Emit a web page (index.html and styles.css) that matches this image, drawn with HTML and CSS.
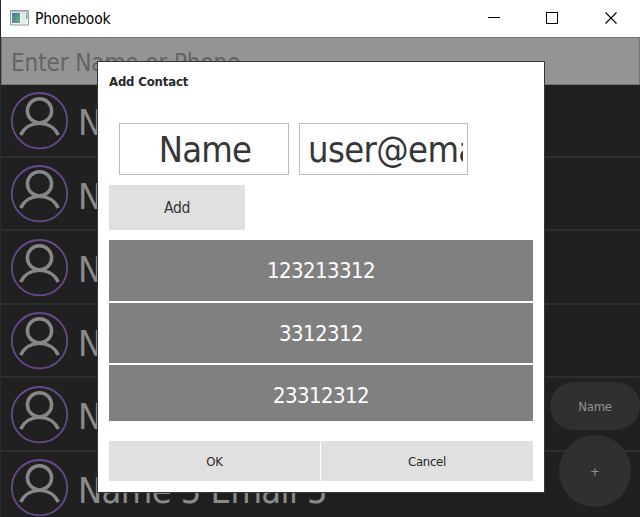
FILE: index.html
```
<!DOCTYPE html>
<html lang="en">
<head>
<meta charset="utf-8">
<title>Phonebook</title>
<link rel="stylesheet" href="styles.css">
</head>
<body>
<svg class="defs" width="0" height="0">
  <symbol id="person" viewBox="0 0 58 58">
    <circle cx="28.5" cy="28.7" r="27.7" fill="none" stroke="#67498a" stroke-width="1.8"/>
    <g fill="none" stroke="#878787" stroke-width="3.5">
      <circle cx="28.5" cy="18.8" r="12.1"/>
      <path d="M9.7 43C17 27.3 40 27.3 47.3 43"/>
    </g>
  </symbol>
</svg>
<div class="window">
  <header class="titlebar">
    <svg class="app-icon" width="19" height="16" viewBox="0 0 19 16">
      <defs><linearGradient id="screen" x1="0" y1="0" x2="1" y2="1"><stop offset="0" stop-color="#4777a0"/><stop offset="1" stop-color="#63b37c"/></linearGradient></defs>
      <path fill="#f3f4f5" stroke="#969ca1" d="M.5.5h18v14.500h-18z"/>
      <path fill="#bfc4c9" d="M1 1h17v1.500H1z"/>
      <path fill="url(#screen)" d="M2 3h8v10H2z"/>
      <path fill="#e5e8eb" d="M11 3h4v10h-4z"/>
      <path fill="#62ad8b" d="M16 3h1.500v6H16z"/>
    </svg>
    <h1 class="title">Phonebook</h1>
    <svg class="controls" width="132" height="14" viewBox="0 0 132 14" fill="none" stroke="#000">
      <path d="M0 6.500h12M58.500 1.500h11v11h-11z" shape-rendering="crispEdges"/>
      <path d="M117.500 1.500l11 11M128.500 1.500l-11 11" stroke-width="1.100"/>
    </svg>
  </header>
  <main class="content">
    <div class="search">Enter Name or Phone</div>
    <ul class="contacts">
      <li class="contact"><svg class="avatar"><use href="#person"/></svg><span>Name 0 Email 0</span></li>
      <li class="contact"><svg class="avatar"><use href="#person"/></svg><span>Name 1 Email 1</span></li>
      <li class="contact"><svg class="avatar"><use href="#person"/></svg><span>Name 2 Email 2</span></li>
      <li class="contact"><svg class="avatar"><use href="#person"/></svg><span>Name 3 Email 3</span></li>
      <li class="contact"><svg class="avatar"><use href="#person"/></svg><span>Name 4 Email 4</span></li>
      <li class="contact"><svg class="avatar"><use href="#person"/></svg><span>Name 5 Email 5</span></li>
    </ul>
  </main>
  <div class="floating">
    <button class="sort">Name</button>
    <button class="plus">+</button>
  </div>
  <section class="dialog">
    <h2 class="dialog-title">Add Contact</h2>
    <div class="fields">
      <div class="field name"><span>Name</span></div>
      <div class="field email"><span>user@email.com</span></div>
    </div>
    <button class="add">Add</button>
    <ul class="phones">
      <li>123213312</li>
      <li>3312312</li>
      <li>23312312</li>
    </ul>
    <div class="actions">
      <button>OK</button>
      <button>Cancel</button>
    </div>
  </section>
</div>
</body>
</html>
```
FILE: styles.css
```
* { box-sizing: border-box; }
body { margin: 0; }
body, button { font-family: "DejaVu Sans Condensed", "DejaVu Sans", sans-serif; font-stretch: condensed; }
h1, h2, ul { margin: 0; padding: 0; font-weight: normal; }
ul { list-style: none; }
button { border: 0; padding: 0; }
.defs { position: absolute; }
.window { position: relative; width: 640px; height: 517px; overflow: hidden; display: flex; flex-direction: column; background: #202020; border-left: 1px solid #2b2b2b; }
.titlebar { height: 37px; flex: none; display: flex; align-items: center; background: #fff; padding: 0 20px 0 9px; }
.app-icon { margin-top: -2px; }
.title { flex: 1; margin-left: 6px; font-size: 15.5px; line-height: 20px; letter-spacing: -.2px; }
.controls { margin-top: -2px; }
.search { height: 48px; padding-left: 9px; border: 1px solid #727272; background: #949494; color: #646464; font-size: 24px; line-height: 50px; letter-spacing: -.1px; white-space: nowrap; }
.contacts { margin-top: -.9px; }
.contact { height: 73.5px; padding: 2px 0 0 10px; display: flex; align-items: center; border-bottom: 2px solid #2e2e2e; color: #8b8b8b; font-size: 36px; letter-spacing: -.6px; white-space: nowrap; }
.contact span { margin-top: 4px; }
.avatar { width: 58px; height: 58px; margin-right: 9px; flex: none; }
.floating { position: absolute; right: 0; top: 382px; width: 90px; display: flex; flex-direction: column; align-items: center; gap: 5px; }
.floating button { background: #303032; color: #919191; }
.sort { width: 90px; height: 48px; border-radius: 24px; font-size: 13px; letter-spacing: -.3px; }
.plus { width: 72px; height: 72px; border-radius: 50%; font-size: 13px; }
.dialog { position: absolute; left: 96px; top: 61px; width: 448px; height: 432px; padding: 11px 11px 0; border: 1px solid #353637; background: #fff; color: #353637; }
.dialog-title { height: 50px; font-size: 13px; line-height: 18px; font-weight: bold; color: #26282a; letter-spacing: -.15px; }
.fields { display: flex; gap: 10px; padding-left: 10px; }
.field { height: 52px; border: 1px solid #bdbdbd; padding: 0 4px; font-size: 36px; line-height: 51px; letter-spacing: -.8px; }
.field span { display: block; height: 50px; overflow: hidden; white-space: nowrap; }
.name { width: 170px; padding-left: 6px; text-align: center; }
.email { width: 169px; letter-spacing: -.6px; }
.email span { padding-left: 4px; }
.add { display: block; width: 136px; height: 45px; margin-top: 10px; background: #e0e0e0; color: #353637; font-size: 15.5px; letter-spacing: -.3px; }
.phones { margin-top: 10px; height: 181px; overflow: hidden; display: flex; flex-direction: column; gap: 2px; }
.phones li { flex: none; height: 60.500px; background: #808080; color: #fff; text-align: center; font-size: 22px; line-height: 62px; letter-spacing: -.6px; }
.actions { margin-top: 20px; display: grid; grid-template-columns: 211px 212px; gap: 1px; }
.actions button { height: 40px; background: #e0e0e0; color: #26282a; font-size: 13px; letter-spacing: -.3px; }
```
